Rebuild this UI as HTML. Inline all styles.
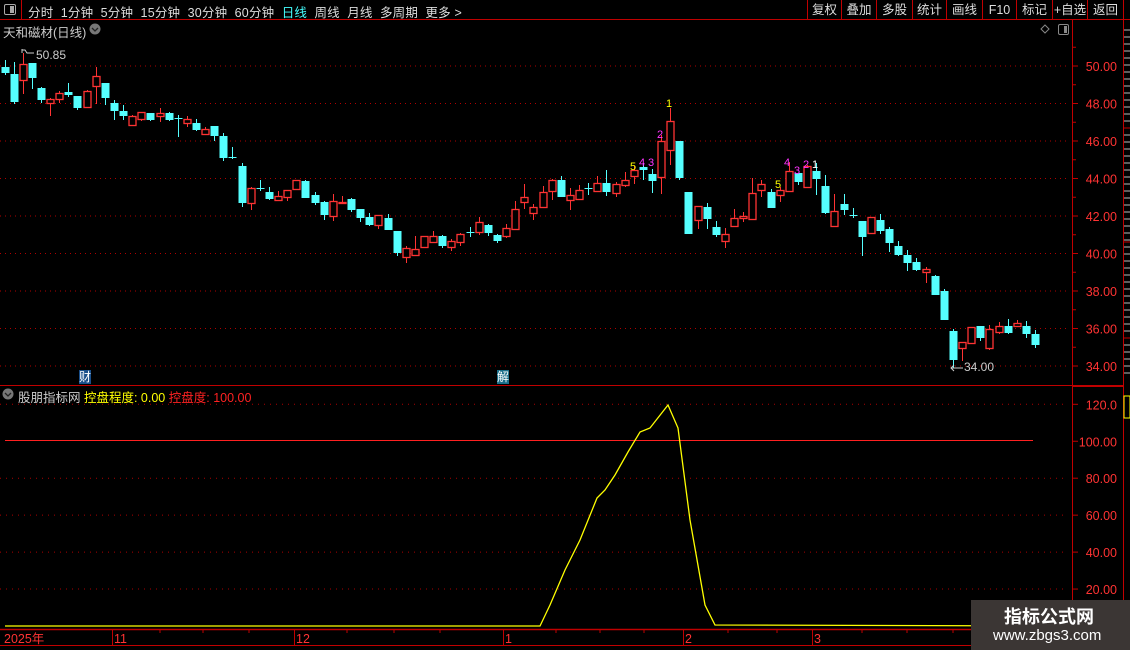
<!DOCTYPE html>
<html><head><meta charset="utf-8"><style>
html,body{margin:0;padding:0;background:#000;width:1130px;height:650px;overflow:hidden;font-family:"Liberation Sans","Noto Sans CJK SC",sans-serif;}
.t{position:absolute;white-space:nowrap;font-size:12px;}
</style></head><body>
<svg id="s" width="1130" height="650" style="position:absolute;left:0;top:0" xmlns="http://www.w3.org/2000/svg" font-family="Liberation Sans, Noto Sans CJK SC, sans-serif">
</svg>
<div class="t" style="left:28px;top:2px;color:#ddd;font-size:12.5px;letter-spacing:0.2px">分时&nbsp; 1分钟&nbsp; 5分钟&nbsp; 15分钟&nbsp; 30分钟&nbsp; 60分钟&nbsp; <span style="color:#4ff">日线</span>&nbsp; 周线&nbsp; 月线&nbsp; 多周期&nbsp; 更多 &gt;</div>
<div class="t" style="left:3px;top:22px;color:#ccc;font-size:12.5px">天和磁材(日线)</div>
<div class="t" style="left:36px;top:48px;color:#ccc;font-size:12px">50.85</div>
<div class="t" style="left:964px;top:360px;color:#ccc;font-size:12px">34.00</div>
<div class="t" style="left:18px;top:387px;color:#ccc;font-size:12.5px">股朋指标网 <span style="color:#ff0">控盘程度: 0.00</span> <span style="color:#f22">控盘度: 100.00</span></div>
<div class="t" style="left:79px;top:370px;color:#fff;background:#1a4f8a;font-size:12px;line-height:14px">财</div>
<div class="t" style="left:497px;top:370px;color:#fff;background:#1a6f8a;font-size:12px;line-height:14px">解</div>
<div style="position:absolute;left:971px;top:600px;width:159px;height:50px;background:#3b3634"></div>
<div class="t" style="left:1004px;top:603px;color:#fff;font-size:18px;font-weight:bold">指标公式网</div>
<div class="t" style="left:993px;top:627px;color:#fff;font-size:15px">www.zbgs3.com</div>
<script>
const s=document.getElementById('s');let h='';
const R='#ff3333',C='#55ffff',DR='#c00000';
function L(x1,y1,x2,y2,c,w,d){h+=`<line x1="${x1}" y1="${y1}" x2="${x2}" y2="${y2}" stroke="${c}" stroke-width="${w||1}" ${d?'stroke-dasharray="'+d+'"':''}/>`}
function T(x,y,t,c,sz,a){h+=`<text x="${x}" y="${y}" fill="${c}" font-size="${sz||12}" ${a?'text-anchor="'+a+'"':''}>${t}</text>`}
L(0,19.5,1130,19.5,DR);L(21.5,0,21.5,19,DR);
h+=`<rect x="4.5" y="4.5" width="11" height="10" rx="1.5" fill="none" stroke="#aaa"/><rect x="10" y="6" width="4" height="7" fill="#aaa"/>`;
const bx=[807,841,876,912,946,982,1016,1052,1087,1123];bx.forEach(x=>L(x+.5,0,x+.5,19,DR));
const bl=['复权','叠加','多股','统计','画线','F10','标记','+自选','返回'];
bl.forEach((t,i)=>T((bx[i]+bx[i+1])/2+.5,14,t,'#ddd',12.5,'middle'));
h+=`<circle cx="95" cy="29" r="5.5" fill="#777"/><path d="M92 28l3 3 3-3" stroke="#222" fill="none" stroke-width="1.3"/>`;
h+=`<circle cx="8" cy="394" r="5.5" fill="#777"/><path d="M5 393l3 3 3-3" stroke="#222" fill="none" stroke-width="1.3"/>`;
h+=`<path d="M1045 25l4 4-4 4-4-4z" fill="none" stroke="#888"/><rect x="1058.5" y="24.5" width="10" height="10" rx="1.5" fill="none" stroke="#888"/><rect x="1064" y="26" width="3" height="7" fill="#888"/>`;
L(1072.5,20,1072.5,630,DR);L(1123.5,20,1123.5,650,DR);
L(0,385.5,1123,385.5,DR);L(1072,386,1123,386,DR,2);
for(let p=34;p<=50;p+=2){let y=66+(50-p)*18.75;L(0,y,1068,y,'#b00000',1,'1 4');L(1072,y,1078,y,DR);T(1117,y+5,p.toFixed(2),'#ff3333',12.5,'end');}
for(let p=35;p<=51;p+=2){let y=66+(50-p)*18.75;if(y>22&&y<380)L(1072,y,1076,y,DR);}
for(let y=30;y<380;y+=7)L(1124,y,1130,y,'#bbb');
[128,242,338].forEach(y=>L(1123,y,1130,y,DR));
h+=`<rect x="1124" y="396" width="6" height="22" fill="none" stroke="#ff0"/>`;
const iy=v=>626-v*1.8475;
[120,80,60,40,20].forEach(v=>{L(0,iy(v),1068,iy(v),'#aa0000',1,'1 5');});
[120,100,80,60,40,20].forEach(v=>{L(1072,iy(v),1078,iy(v),DR);T(1117,iy(v)+5,v==120?'120.0':v.toFixed(2),'#ff3333',12.5,'end');});
L(5,440.5,1033,440.5,'#ff2020');
h+=`<polyline fill="none" stroke="#ffff00" stroke-width="1.3" points="5,626 540,626 550,605 565,570 580,540 597,498 605,490 615,475 628,452 640,432 650,428 668,405 678,428 690,520 705,605 715,625 1072,626"/>`;
L(0,629.5,1072,629.5,DR,1.5);L(0,645.5,1072,645.5,DR);
[112,294,503,683,812].forEach(x=>L(x+.5,630,x+.5,645,DR));
[160,203,249,347,394,440,556,600,644,728,777,862,907,953,1000].forEach(x=>L(x,630,x,633,DR));
T(4,643,'2025年','#ff3333',12.5);T(114,643,'11','#ff3333',12.5);T(296,643,'12','#ff3333',12.5);T(505,643,'1','#ff3333',12.5);T(685,643,'2','#ff3333',12.5);T(814,643,'3','#ff3333',12.5);
const d=[[67,73,60,75,0],[74,102,62,104,0],[64,80,53,94,1],[63,78,63,89,0],[88,100,87,103,0],[99,103,98,116,1],[93,99,91,103,1],[92,95,83,97,0],[96,108,96,110,0],[91,107,90,107,1],[76,86,67,104,1],[83,98,83,105,0],[103,111,100,120,0],[111,116,105,120,0],[116,125,115,126,1],[112,119,112,121,1],[113,120,113,121,0],[113,116,108,122,1],[113,120,112,121,0],[118,118.5,115,137,0],[119,123,116,127,1],[123,130,119,131,0],[129,134,127,134,1],[126,136,126,141,0],[136,158,133,161,0],[157,157.5,147,159,0],[166,203,163,207,0],[188,203,187,210,1],[188,188.5,180,191,0],[192,199,187,200,0],[196,200,191,201,1],[190,197,190,201,1],[180,189,180,189,1],[181,198,180,198,0],[195,203,192,205,0],[202,215,201,220,0],[201,216,194,221,1],[202,202.5,196,204,1],[199,210,198,212,0],[209,218,209,222,0],
[217,225,213,226,0],[215,225,215,229,1],[218,230,214,230,0],[231,253,231,256,0],[248,257,246,263,1],[249,255,236,256,1],[236,247,236,247,1],[236,242,231,242,1],[236,246,235,248,0],[241,247,239,251,1],[234,242,233,246,1],[232,232.5,227,237,0],[222,232,217,235,1],[225,233,224,236,0],[235,241,234,243,0],[228,236,224,238,1],[209,229,201,229,1],[197,202,184,209,1],[207,213,204,220,1],[192,207,186,207,1],[180,191,179,200,1],[180,197,176,197,0],[195,200,188,210,1],[190,199,185,199,1],[188,188.5,183,195,0],[183,191,176,192,1],[183,192,170,196,0],[184,193,182,197,1],[180,185,172,187,1],[170,176,166,184,1],[167,170,163,180,0],[174,181,169,193,0],[141,177,135,194,1],[121,150,108,165,1],[141,178,141,180,0],[192,234,192,234,0],[206,220,206,229,1],[207,219,203,229,0],[227,235,221,237,0],
[234,241,228,248,1],[218,226,209,227,1],[216,218,212,222,1],[193,219,178,219,1],[184,190,180,197,1],[192,208,189,208,0],[190,195,187,202,1],[171,191,162,191,1],[173,182,173,185,0],[166,187,165,187,1],[171,179,163,195,0],[186,213,175,214,0],[211,226,194,226,1],[204,210,194,215,0],[215,215.5,208,218,0],[221,237,221,256,0],[217,233,217,233,1],[220,231,214,234,0],[229,243,227,252,0],[246,255,241,256,0],[255,263,250,271,0],[262,270,258,271,0],[269,272,267,283,1],[276,295,275,295,0],[291,320,289,320,0],[331,360,329,368,0],[342,348,342,361,1],[327,343,327,343,1],[326,338,326,341,0],[329,348,325,350,1],[326,332,322,334,1],[326,333,319,334,0],[323,326,320,327,1],[326,334,321,338,0],[334,345,330,348,0]];
d.forEach((c,i)=>{let x=Math.round(4.5+9.12*i);let col=c[4]?R:C;
L(x+.5,c[2],x+.5,c[3],col);
let hgt=Math.max(c[1]-c[0],1);
if(c[4])h+=`<rect x="${x-3}" y="${c[0]+.5}" width="7" height="${hgt}" fill="#000" stroke="${col}" stroke-width="1.3"/>`;
else h+=`<rect x="${x-3.5}" y="${c[0]}" width="8" height="${hgt}" fill="${col}"/>`;});
L(22,49,22,53,'#ccc');h+=`<path d="M22 50h3l2 3h7" stroke="#ccc" fill="none"/>`;
h+=`<path d="M951 368h12M954 365l-3 3 3 3" stroke="#ccc" fill="none"/>`;
const lb=[[633,170,'5','#ff0'],[642,166,'4','#f3f'],[651,166,'3','#f3f'],[660,138,'2','#f3f'],[669,107,'1','#ff0'],[778,188,'5','#ff0'],[787,166,'4','#f3f'],[797,174,'3','#f3f'],[806,168,'2','#f3f'],[815,168,'1','#fff']];
lb.forEach(l=>T(l[0],l[1],l[2],l[3],11,'middle'));
s.innerHTML=h;
</script>
</body></html>
